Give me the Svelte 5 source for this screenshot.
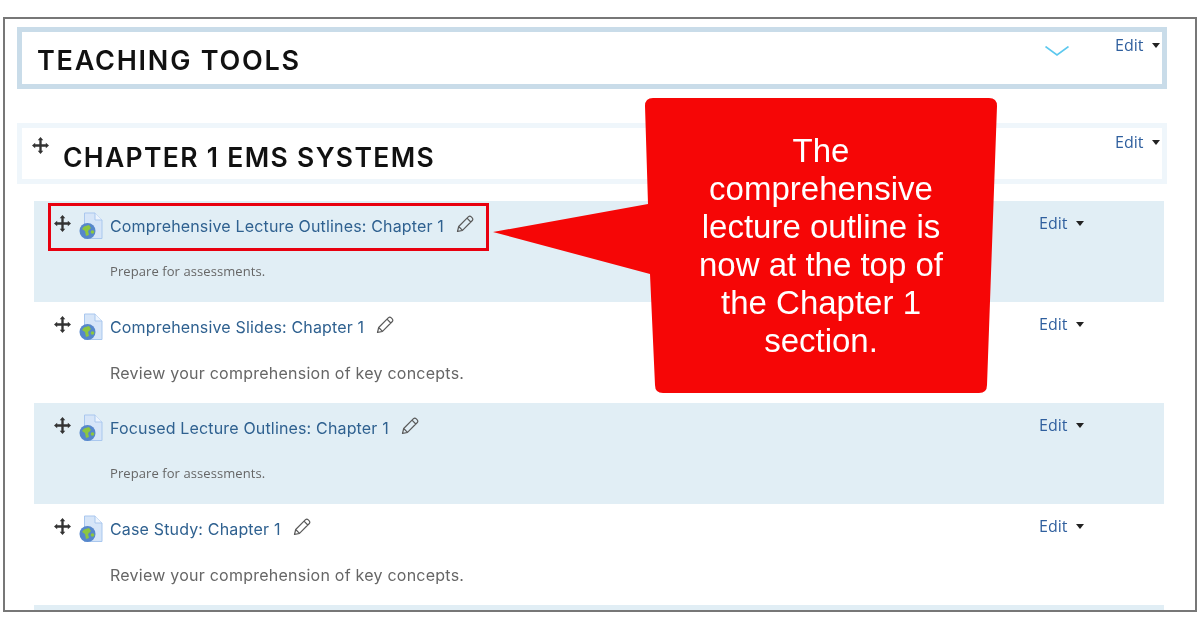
<script>
  const rows = [
    { title: "Comprehensive Lecture Outlines: Chapter 1", desc: "Prepare for assessments.", small: true, shaded: true, marked: true },
    { title: "Comprehensive Slides: Chapter 1", desc: "Review your comprehension of key concepts." },
    { title: "Focused Lecture Outlines: Chapter 1", desc: "Prepare for assessments.", small: true, shaded: true },
    { title: "Case Study: Chapter 1", desc: "Review your comprehension of key concepts." },
  ];
</script>

{#snippet move()}
  <svg class="move" viewBox="0 0 16 16" width="17" height="17">
    <path d="M8 0 10.6 3H9.1V6.9H13V5.4L16 8 13 10.6V9.1H9.1V13H10.6L8 16 5.4 13H6.9V9.1H3V10.6L0 8 3 5.4V6.9H6.9V3H5.4Z" fill="#333" />
  </svg>
{/snippet}

{#snippet edit()}
  <span class="edit">Edit<i class="caret"></i></span>
{/snippet}

<div class="frame">
  <section class="head teaching">
    <h2>TEACHING TOOLS</h2>
    <svg class="chevron" viewBox="0 0 24 10" width="24" height="10">
      <path d="M0.5 0.5 12 9 23.5 0.5" fill="none" stroke="#5cc8ee" stroke-width="1.6" />
    </svg>
    {@render edit()}
  </section>

  <section class="head chapter">
    {@render move()}
    <h2>CHAPTER 1 EMS SYSTEMS</h2>
    {@render edit()}
  </section>

  <div class="rows">
    {#each rows as row}
      <div class="row" class:shaded={row.shaded}>
        <div class="line">
          {@render move()}
          <svg class="doc" viewBox="0 0 24 28" width="24" height="28">
            <path d="M5.5 1H16L23 8V26.5H5.5Z" fill="#d6e5f8" stroke="#a9c7ee" />
            <path d="M16 1V8H23" fill="#edf4fd" stroke="#a9c7ee" />
            <circle cx="8.500" cy="19" r="8" fill="#5687cb" />
            <path d="M5 14.500 10 13 12 16 9 19 10 23 7 24 6 19 3 17Z" fill="#8cc63f" />
            <circle cx="13.500" cy="20" r="1.800" fill="#8cc63f" />
          </svg>
          <span class="title">{row.title}</span>
          <svg class="pencil" viewBox="0 0 18 18" width="18" height="18">
            <path d="M1.500 16.500 2.700 11.500 12.500 1.700Q13.800 0.600 15.300 1.900L16.200 2.800Q17.400 4.200 16.300 5.500L6.500 15.300ZM2.700 11.500 6.500 15.300M11 3.200 14.800 7" fill="none" stroke="#5a5a5a" stroke-width="1.200" stroke-linejoin="round" />
          </svg>
          {@render edit()}
        </div>
        <p class="desc" class:small={row.small}>{row.desc}</p>
        {#if row.marked}
          <div class="marker"></div>
        {/if}
      </div>
    {/each}
    <div class="row shaded"></div>
  </div>

  <div class="callout">
    <svg viewBox="0 0 510 300" width="510" height="300">
      <path d="M160 0H496Q504 0 504 8L494 287Q494 295 486 295H170Q162 295 162 287L157 176 0 134 155 106 152 8Q152 0 160 0Z" fill="#f60606" />
    </svg>
    <p>The<br />comprehensive<br />lecture outline is<br />now at the top of<br />the Chapter 1<br />section.</p>
  </div>
</div>

<style>
  :global(body) {
    background: #fff;
  }

  .frame {
    position: relative;
    box-sizing: border-box;
    width: 1194px;
    height: 595px;
    margin: 17px 0 0 3px;
    padding: 8px 0 0 12px;
    border: 2px solid #777;
    overflow: hidden;
    background: #fff;
    filter: blur(0.35px);
  }

  .head {
    position: relative;
    box-sizing: border-box;
    display: flex;
    width: 1150px;
    height: 62px;
    border: 5px solid #c9dce9;
  }

  .teaching {
    padding: 11px 15px 0;
  }

  .chapter {
    height: 61px;
    margin-top: 34px;
    padding: 6px 0 0 10px;
    border-color: #eff6fb;
  }

  h2 {
    margin: 0;
    font: 600 27px/36px Inter, sans-serif;
    letter-spacing: 1.77px;
    color: #111;
  }

  .chapter h2 {
    margin: 5px 0 0 14px;
    font-size: 26.5px;
    letter-spacing: 1.33px;
  }

  .chevron {
    position: absolute;
    top: 14px;
    left: 1023px;
  }

  .head .edit {
    position: absolute;
    top: 2px;
    left: 1093px;
    margin: 0;
  }

  .chapter .edit {
    top: 3px;
    left: 1093px;
  }

  .rows {
    margin: 17px 0 0 17px;
    width: 1130px;
  }

  .row {
    position: relative;
    box-sizing: border-box;
    height: 101px;
    padding: 11px 0 0 20px;
  }

  .shaded {
    background: #e1eef5;
  }

  .line {
    display: flex;
    align-items: flex-start;
  }

  .move {
    flex: none;
    margin-top: 3px;
  }

  .doc {
    flex: none;
    margin: 0 7px 0 8px;
  }

  .title {
    margin-top: 3px;
    font: 400 16px/22px Inter, sans-serif;
    letter-spacing: 0.16px;
    color: #2f6190;
  }

  .pencil {
    flex: none;
    margin: 3px 0 0 12px;
  }

  .edit {
    display: flex;
    align-items: center;
    margin: 0 0 0 auto;
    width: 80px;
    font: 400 16px/22px "Open Sans", sans-serif;
    color: #2f5f9e;
  }

  .line .edit {
    margin-right: 45px;
    margin-top: 0;
  }

  .caret {
    width: 0;
    height: 0;
    margin-left: 9px;
    border-style: solid;
    border-width: 5px 4.500px 0;
    border-color: #222 transparent transparent;
  }

  .desc {
    margin: 20px 0 0 56px;
    font: 400 16px/24px Inter, sans-serif;
    letter-spacing: 0.24px;
    color: #666;
  }

  .desc.small {
    margin-top: 22px;
    font: 400 13px/18px "Open Sans", sans-serif;
    letter-spacing: 0.08px;
  }

  .marker {
    position: absolute;
    top: 2px;
    left: 14px;
    box-sizing: border-box;
    width: 441px;
    height: 48px;
    border: 3px solid #e8000f;
  }

  .callout {
    position: absolute;
    top: 79px;
    left: 488px;
    width: 510px;
    height: 300px;
  }

  .callout svg {
    display: block;
  }

  .callout p {
    position: absolute;
    top: 34px;
    left: 161px;
    width: 334px;
    margin: 0;
    text-align: center;
    font: 400 33px/38px "Liberation Sans", Arial, sans-serif;
    color: #fff;
  }
</style>
